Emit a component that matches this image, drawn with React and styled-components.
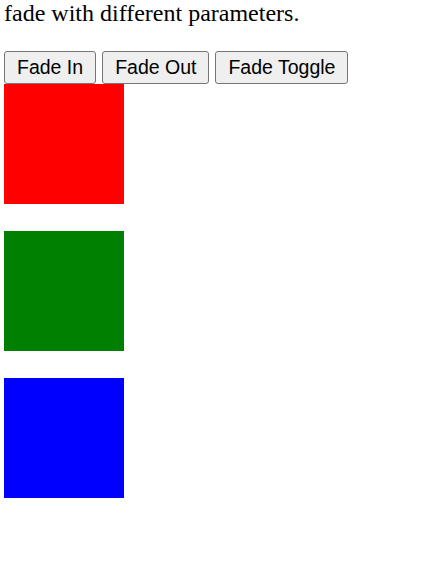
import React from "react";
import styled, { createGlobalStyle } from "styled-components";

const Global = createGlobalStyle`
  html, body { margin: 0; padding: 0; background: #fff; }
`;

const Page = styled.div`
  padding: 0 4px;
  font-family: "Liberation Serif", "Times New Roman", serif;
  color: #000;
`;

const Intro = styled.p`
  margin: 0 0 24px;
  font-size: 24px;
  line-height: normal;
`;

const Toolbar = styled.div`
  display: flex;
  gap: 6px;
`;

const Button = styled.button`
  font-family: "Liberation Sans", Arial, sans-serif;
  font-size: 19.5px;
  line-height: 22px;
  color: #000;
  background: #efefef;
  border: 1px solid #767676;
  border-radius: 3px;
  padding: 4px 12px 5px;
  margin: 0;
  cursor: pointer;
`;

const Boxes = styled.div`
  display: flex;
  flex-direction: column;
  gap: 27px;
`;

const Box = styled.div`
  width: 120px;
  height: 120px;
  background: ${(p) => p.$color};
`;

export default function App() {
  return (
    <Page>
      <Global />
      <Intro>fade with different parameters.</Intro>
      <Toolbar>
        <Button>Fade In</Button>
        <Button>Fade Out</Button>
        <Button>Fade Toggle</Button>
      </Toolbar>
      <Boxes>
        <Box $color="#ff0000" />
        <Box $color="#008000" />
        <Box $color="#0000ff" />
      </Boxes>
    </Page>
  );
}
